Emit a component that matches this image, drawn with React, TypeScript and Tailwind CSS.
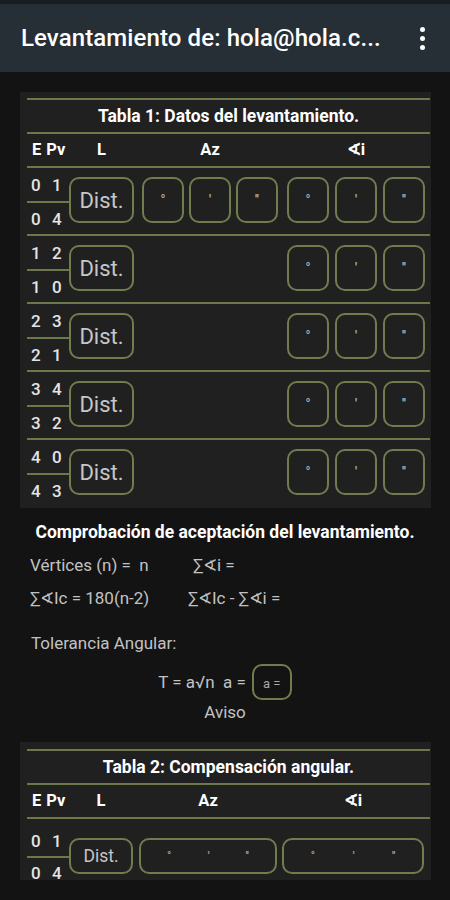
import React from "react";

const LINE = "h-[2px] bg-[#6b794a]";
const BORDER = "border-2 border-[#6f7d4d]";

function Line() {
  return <div className={LINE} />;
}

function Nums({ a, b }: { a: string; b: string }) {
  return (
    <div className="flex pl-[4px] text-[17px] font-medium text-[#e4e4e4] leading-[18px]">
      <span className="w-[21px]">{a}</span>
      <span>{b}</span>
    </div>
  );
}

function SmallBox({ s, hidden }: { s: string; hidden?: boolean }) {
  return (
    <div
      className={
        hidden
          ? "w-[42px] h-[46px]"
          : `w-[42px] h-[46px] rounded-[10px] ${BORDER} flex items-center justify-center text-[13px] font-bold text-[#ababab]`
      }
    >
      {hidden ? null : s}
    </div>
  );
}

function DataRow({ top, bottom, az, last }: { top: [string, string]; bottom: [string, string]; az: boolean; last?: boolean }) {
  return (
    <>
      <div className="h-[66px] flex">
        <div className="w-[42px] flex flex-col">
          <div className="h-[33px] flex items-center">
            <Nums a={top[0]} b={top[1]} />
          </div>
          <Line />
          <div className="flex-1 flex items-center">
            <Nums a={bottom[0]} b={bottom[1]} />
          </div>
        </div>
        <div
          className={`mt-[9px] w-[65px] h-[46px] rounded-[10px] ${BORDER} flex items-center justify-center text-[22px] text-[#c6c6c6]`}
        >
          Dist.
        </div>
        <div className="ml-[8px] mt-[9px] flex gap-[5px]">
          <SmallBox s="°" hidden={!az} />
          <SmallBox s="'" hidden={!az} />
          <SmallBox s="''" hidden={!az} />
        </div>
        <div className="ml-[9px] mt-[9px] flex gap-[6px]">
          <SmallBox s="°" />
          <SmallBox s="'" />
          <SmallBox s="''" />
        </div>
      </div>
      {last ? null : <Line />}
    </>
  );
}

function Header({ azW, iW, azMl, iMl, lW }: { azW: number; iW: number; azMl: string; iMl: string; lW: string }) {
  return (
    <div className="h-[32px] flex items-center text-[16.5px] font-bold text-white">
      <div className="w-[42px] flex">
        <span className="ml-[5px]">E</span>
        <span className="ml-[5px]">Pv</span>
      </div>
      <div className={`${lW} text-center`}>L</div>
      <div className={`${azMl} text-center`} style={{ width: azW }}>
        Az
      </div>
      <div className={`${iMl} text-center`} style={{ width: iW }}>
        ∢i
      </div>
    </div>
  );
}

export default function App() {
  const rows: { top: [string, string]; bottom: [string, string]; az: boolean }[] = [
    { top: ["0", "1"], bottom: ["0", "4"], az: true },
    { top: ["1", "2"], bottom: ["1", "0"], az: false },
    { top: ["2", "3"], bottom: ["2", "1"], az: false },
    { top: ["3", "4"], bottom: ["3", "2"], az: false },
    { top: ["4", "0"], bottom: ["4", "3"], az: false },
  ];
  return (
    <div className="w-[450px] h-[900px] overflow-hidden bg-[#131313] font-['Roboto',sans-serif]">
      {/* App bar */}
      <div className="h-[4px] bg-[#171d21]" />
      <div className="h-[68px] bg-[#262f35] flex items-center pl-[21px] pr-[20px] justify-between">
        <div className="text-[24px] font-medium text-white tracking-[0.1px] whitespace-nowrap">
          Levantamiento de: hola@hola.c...
        </div>
        <div className="flex flex-col gap-[4px] items-center mr-[5px]">
          <div className="w-[5px] h-[5px] rounded-full bg-white" />
          <div className="w-[5px] h-[5px] rounded-full bg-white" />
          <div className="w-[5px] h-[5px] rounded-full bg-white" />
        </div>
      </div>

      {/* Card 1 */}
      <div className="mt-[20px] ml-[20px] w-[411px] bg-[#202020] pl-[7px] pr-[1px] pt-[6px] pb-[2px]">
        <Line />
        <div className="h-[32px] flex items-center justify-center text-[17.5px] font-bold text-white">
          Tabla 1: Datos del levantamiento.
        </div>
        <Line />
        <Header azW={136} iW={138} azMl="ml-[8px]" iMl="ml-[9px]" lW="w-[65px]" />
        <Line />
        {rows.map((r, i) => (
          <DataRow key={i} top={r.top} bottom={r.bottom} az={r.az} last={i === rows.length - 1} />
        ))}
      </div>

      {/* Comprobación */}
      <div className="pt-[14px] pb-[20px] text-[#c2c2c2] text-[17px]">
        <div className="h-[20px] leading-[20px] text-center text-[17.5px] font-bold text-white whitespace-nowrap">
          Comprobación de aceptación del levantamiento.
        </div>
        <div className="mt-[12px] h-[22px] leading-[22px] flex pl-[30px]">
          <span className="w-[163px]">Vértices (n) =&nbsp;&nbsp;n</span>
          <span>∑∢i =</span>
        </div>
        <div className="mt-[11px] h-[22px] leading-[22px] flex pl-[30px]">
          <span className="w-[158px]">∑∢Ic = 180(n-2)</span>
          <span>∑∢Ic - ∑∢i =</span>
        </div>
        <div className="mt-[23px] h-[22px] leading-[22px] pl-[31px]">Tolerancia Angular:</div>
        <div className="mt-[10px] h-[36px] flex items-center justify-center gap-[6px]">
          <span className="mt-[2px]">T = a√n&nbsp; a =</span>
          <div className={`w-[40px] h-[36px] rounded-[10px] ${BORDER} flex items-end justify-center pb-[5px] text-[13px] text-[#a8a8a8]`}>
            a =
          </div>
        </div>
        <div className="mt-[2px] h-[20px] leading-[20px] text-center">Aviso</div>
      </div>

      {/* Card 2 */}
      <div className="ml-[20px] w-[411px] h-[138px] overflow-hidden bg-[#202020] pl-[7px] pr-[1px] pt-[7px]">
        <Line />
        <div className="h-[32px] flex items-center justify-center text-[17.5px] font-bold text-white">
          Tabla 2: Compensación angular.
        </div>
        <Line />
        <Header azW={138} iW={142} azMl="ml-[6px]" iMl="ml-[5px]" lW="w-[64px]" />
        <Line />
        <div className="flex">
          <div className="w-[42px] flex flex-col">
            <div className="h-[37px] flex items-end pb-[6px]">
              <Nums a="0" b="1" />
            </div>
            <Line />
            <div className="pt-[6px]">
              <Nums a="0" b="4" />
            </div>
          </div>
          <div className={`mt-[19px] w-[64px] h-[36px] rounded-[10px] ${BORDER} flex items-center justify-center text-[17.5px] text-[#c6c6c6]`}>
            Dist.
          </div>
          <div className={`ml-[6px] mt-[19px] w-[138px] h-[36px] rounded-[10px] ${BORDER} flex items-center justify-around px-[8px] text-[11px] font-bold text-[#a0a0a0]`}>
            <span>°</span>
            <span>'</span>
            <span>''</span>
          </div>
          <div className={`ml-[5px] mt-[19px] w-[142px] h-[36px] rounded-[10px] ${BORDER} flex items-center justify-around px-[8px] text-[11px] font-bold text-[#a0a0a0]`}>
            <span>°</span>
            <span>'</span>
            <span>''</span>
          </div>
        </div>
      </div>
    </div>
  );
}
